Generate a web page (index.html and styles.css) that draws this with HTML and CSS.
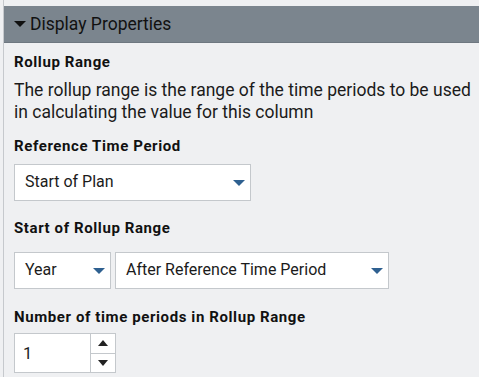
FILE: index.html
```html
<!DOCTYPE html>
<html lang="en">
<head>
  <meta charset="UTF-8">
  <title>Display Properties</title>
  <link rel="stylesheet" href="styles.css">
</head>
<body>
  <div id="panel">
    <div class="section-head">
      <span class="caret"></span>
      <span class="section-title">Display Properties</span>
    </div>
    <div class="section-body">
      <div class="field field-rollup">
        <div class="field-label">Rollup Range</div>
        <p class="field-help">The rollup range is the range of the time periods to be used in calculating the value for this column</p>
      </div>
      <div class="field field-ref">
        <div class="field-label">Reference Time Period</div>
        <div class="select select-wide">
          <span class="select-value">Start of Plan</span>
          <span class="select-arrow"></span>
        </div>
      </div>
      <div class="field field-start">
        <div class="field-label">Start of Rollup Range</div>
        <div class="row">
          <div class="select select-unit">
            <span class="select-value">Year</span>
            <span class="select-arrow"></span>
          </div>
          <div class="select select-when">
            <span class="select-value">After Reference Time Period</span>
            <span class="select-arrow"></span>
          </div>
        </div>
      </div>
      <div class="field field-count">
        <div class="field-label">Number of time periods in Rollup Range</div>
        <div class="number">
          <span class="number-value">1</span>
          <div class="spinner">
            <span class="spin spin-up"></span>
            <span class="spin spin-down"></span>
          </div>
        </div>
      </div>
    </div>
  </div>
</body>
</html>
```

FILE: styles.css
```css
* {
  box-sizing: border-box;
  font-family: Roboto, "Liberation Sans", Arial, sans-serif;
}
html, body {
  margin: 0;
  height: 100%;
  background: #eff0f2;
  color: #1b1b1b;
}
#panel {
  margin-left: 3px;
  min-height: 100%;
  border-left: 1px solid #c6c9cd;
  padding-top: 6px;
}
.section-head {
  height: 37px;
  background: #7b858e;
  border-bottom: 1px solid #6e7780;
  display: flex;
  align-items: center;
  padding-left: 10px;
}
.caret {
  width: 0;
  height: 0;
  border-left: 6px solid transparent;
  border-right: 6px solid transparent;
  border-top: 6px solid #111;
  margin-right: 4px;
}
.section-title {
  font-size: 17.5px;
  color: #111;
}
.section-body {
  padding: 10px 4px 0 10px;
}
.field-label {
  font-size: 15px;
  font-weight: bold;
  letter-spacing: 0.6px;
  line-height: 18px;
  color: #111;
}
.field-help {
  margin: 8px 0 0 0;
  font-size: 17.5px;
  line-height: 22px;
}
.field-ref {
  margin-top: 14px;
}
.field-ref .field-label {
  margin-bottom: 9px;
}
.field-start {
  margin-top: 18px;
}
.field-start .field-label {
  margin-bottom: 15px;
}
.field-count {
  margin-top: 19px;
}
.field-count .field-label {
  margin-bottom: 7px;
}
.row {
  display: flex;
  gap: 4px;
}
.select {
  height: 37px;
  background: #fff;
  border: 1px solid #c4c8cc;
  display: flex;
  align-items: center;
  justify-content: space-between;
  padding: 0 5px 2px 10px;
}
.select-wide {
  width: 237px;
}
.select-unit {
  width: 97px;
}
.select-when {
  width: 274px;
}
.select-value {
  font-size: 16px;
}
.select-arrow {
  width: 0;
  height: 0;
  margin-top: 2px;
  border-left: 6px solid transparent;
  border-right: 6px solid transparent;
  border-top: 6px solid #2e6090;
}
.number {
  width: 102px;
  height: 40px;
  background: #fff;
  border: 1px solid #c4c8cc;
  display: flex;
  align-items: center;
}
.number-value {
  flex: 1;
  font-size: 16.5px;
  padding-left: 8px;
}
.spinner {
  width: 25px;
  height: 100%;
  border-left: 1px solid #c4c8cc;
  display: flex;
  flex-direction: column;
}
.spin {
  flex: 1;
  display: flex;
  align-items: center;
  justify-content: center;
}
.spin-up {
  border-bottom: 1px solid #c4c8cc;
}
.spin-up::after,
.spin-down::after {
  content: "";
  border-left: 5px solid transparent;
  border-right: 5px solid transparent;
}
.spin-up::after {
  border-bottom: 6px solid #222;
}
.spin-down::after {
  border-top: 6px solid #222;
}
```
